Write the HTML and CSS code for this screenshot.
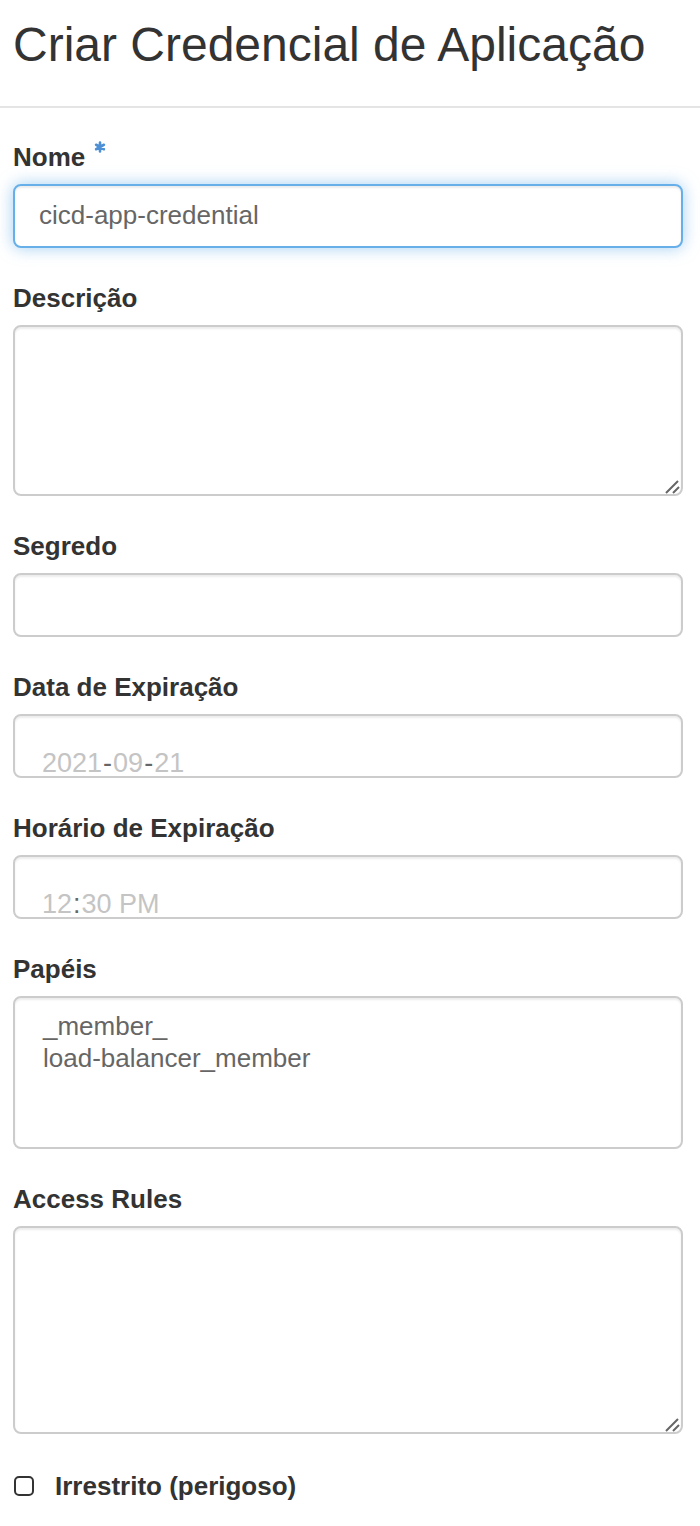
FILE: index.html
```html
<!DOCTYPE html>
<html lang="pt">
<head>
<meta charset="utf-8">
<title>Criar Credencial de Aplicação</title>
<link rel="stylesheet" href="styles.css">
</head>
<body>
<div class="modal">
  <div class="modal-header">
    <h3 class="modal-title">Criar Credencial de Aplicação</h3>
  </div>
  <div class="modal-body">
    <div class="form-group">
      <label class="control-label" for="name">Nome<svg class="req" width="12" height="12" viewBox="0 0 12 12" aria-hidden="true"><path d="M6 1.5V10.5M2.1 3.75L9.9 8.25M2.1 8.25L9.9 3.75" stroke="#4d90d6" stroke-width="2.6" stroke-linecap="round" fill="none"/></svg></label>
      <input id="name" class="form-control focus" type="text" value="cicd-app-credential">
    </div>
    <div class="form-group">
      <label class="control-label" for="desc">Descrição</label>
      <div class="ta-wrap">
        <textarea id="desc" class="form-control ta-desc"></textarea>
        <svg class="grip" width="20" height="20" viewBox="0 0 20 20" aria-hidden="true"><path d="M3 17L15 5M10 17L16 11" stroke="#666" stroke-width="2" fill="none"/></svg>
      </div>
    </div>
    <div class="form-group">
      <label class="control-label" for="secret">Segredo</label>
      <input id="secret" class="form-control" type="password">
    </div>
    <div class="form-group">
      <label class="control-label">Data de Expiração</label>
      <div class="form-control fake-date"><span>2021</span><span class="sep">-</span><span>09</span><span class="sep">-</span><span>21</span></div>
    </div>
    <div class="form-group">
      <label class="control-label">Horário de Expiração</label>
      <div class="form-control fake-date"><span>12</span><span class="sep">:</span><span>30 PM</span></div>
    </div>
    <div class="form-group">
      <label class="control-label">Papéis</label>
      <div class="form-control listbox">
        <div class="option">_member_</div>
        <div class="option">load-balancer_member</div>
      </div>
    </div>
    <div class="form-group">
      <label class="control-label" for="rules">Access Rules</label>
      <div class="ta-wrap">
        <textarea id="rules" class="form-control ta-rules"></textarea>
        <svg class="grip" width="20" height="20" viewBox="0 0 20 20" aria-hidden="true"><path d="M3 17L15 5M10 17L16 11" stroke="#666" stroke-width="2" fill="none"/></svg>
      </div>
    </div>
    <div class="checkbox">
      <input id="unrestricted" type="checkbox" class="check">
      <label for="unrestricted" class="check-label">Irrestrito (perigoso)</label>
    </div>
  </div>
</div>
</body>
</html>
```

FILE: styles.css
```css
* {
  box-sizing: border-box;
}

body {
  margin: 0;
  background: #fff;
  color: #333;
  font-family: "Liberation Sans", Arial, sans-serif;
}

.modal-header {
  padding: 19px 17px 34px 13px;
  border-bottom: 2px solid #e5e5e5;
}

.modal-title {
  margin: 0;
  font-size: 48px;
  font-weight: normal;
  line-height: 52.8px;
  color: #333;
}

.modal-body {
  padding: 29px 17px 30px 13px;
}

.form-group {
  margin-bottom: 30px;
}

.control-label {
  display: block;
  font-size: 26px;
  font-weight: bold;
  line-height: 37px;
  padding-top: 2px;
  margin-bottom: 8px;
  color: #333;
}

.req {
  vertical-align: top;
  margin-top: 2px;
  margin-left: 9px;
}

.form-control {
  display: block;
  width: 100%;
  height: 64px;
  padding: 12px 24px;
  border: 2px solid #ccc;
  border-radius: 8px;
  background: #fff;
  color: #666;
  font-family: "Liberation Sans", Arial, sans-serif;
  font-size: 26px;
  box-shadow: inset 0 2px 2px rgba(0, 0, 0, 0.075);
  outline: none;
  margin: 0;
}

.form-control.focus {
  border-color: #66afe9;
  box-shadow: inset 0 2px 2px rgba(0, 0, 0, 0.075), 0 0 16px rgba(102, 175, 233, 0.6);
}

.ta-wrap {
  position: relative;
}

textarea.form-control {
  resize: none;
}

.ta-desc {
  height: 171px;
}

.ta-rules {
  height: 208px;
}

.grip {
  position: absolute;
  right: 0;
  bottom: 0;
}

.fake-date {
  padding: 29px 0 0 27px;
  font-size: 27px;
  line-height: 37px;
  color: #c4c4c4;
  overflow: hidden;
  white-space: nowrap;
}

.fake-date .sep {
  color: #666;
  margin: 0 1px;
}

.listbox {
  height: 153px;
  padding: 12px 28px;
}

.option {
  font-size: 26px;
  line-height: 32px;
  color: #666;
}

.checkbox {
  display: flex;
  align-items: center;
  gap: 21px;
  padding-top: 4px;
}

.check {
  appearance: none;
  -webkit-appearance: none;
  width: 20px;
  height: 20px;
  margin: 0 0 0 1px;
  border: 2px solid #333;
  border-radius: 5px;
  background: #fff;
}

.check-label {
  font-size: 26px;
  font-weight: bold;
  line-height: 37px;
  color: #333;
}
```
